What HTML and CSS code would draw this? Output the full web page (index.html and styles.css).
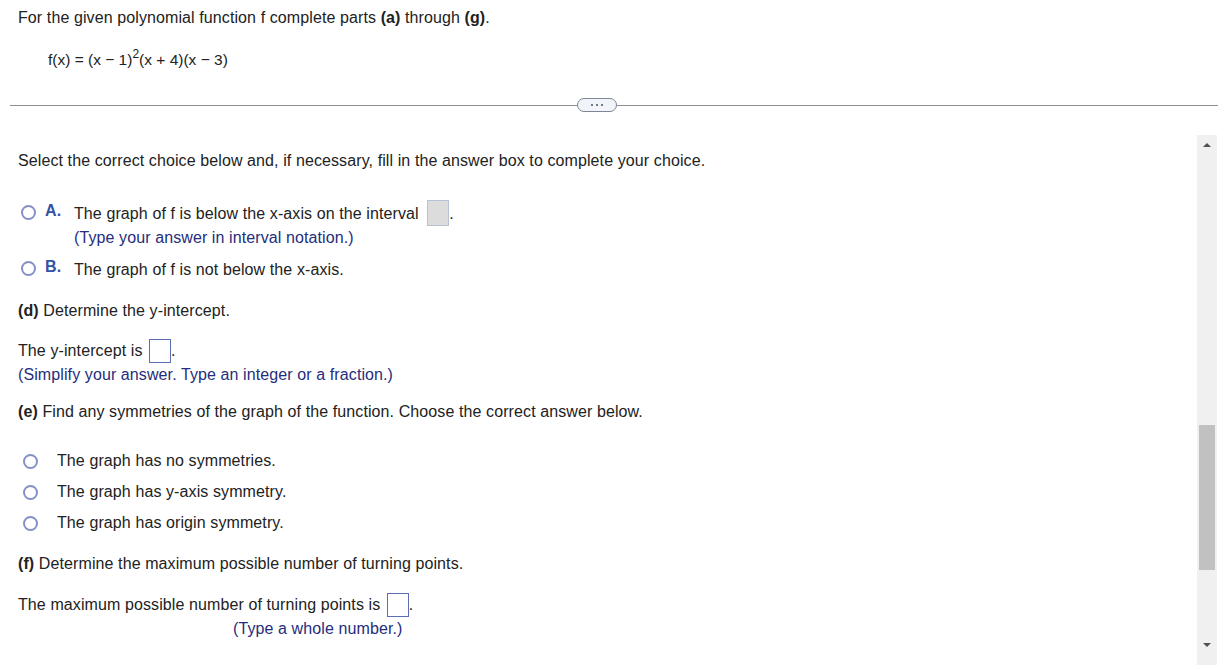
FILE: index.html
```html
<!DOCTYPE html>
<html>
<head>
<meta charset="utf-8">
<link rel="stylesheet" href="styles.css">
</head>
<body>
<div class="top">
  <div class="line intro">For the given polynomial function f complete parts <b>(a)</b> through <b>(g)</b>.</div>
  <div class="line formula">f(x) = (x − 1)<sup>2</sup>(x + 4)(x − 3)</div>
</div>
<div class="divider">
  <span class="rule rule-left"></span>
  <span class="pill"><i></i><i></i><i></i></span>
  <span class="rule"></span>
</div>
<div class="panel">
  <div class="content">
    <div class="line select">Select the correct choice below and, if necessary, fill in the answer box to complete your choice.</div>
    <div class="line choice choice-a"><span class="radio"></span><span class="letter">A.</span><span>The graph of f is below the x-axis on the interval <span class="box box-gray"></span>.</span></div>
    <div class="line hint hint-a">(Type your answer in interval notation.)</div>
    <div class="line choice choice-b"><span class="radio"></span><span class="letter">B.</span><span>The graph of f is not below the x-axis.</span></div>
    <div class="line part part-d"><b>(d)</b> Determine the y-intercept.</div>
    <div class="line yint">The y-intercept is <span class="box"></span>.</div>
    <div class="line hint hint-d">(Simplify your answer. Type an integer or a fraction.)</div>
    <div class="line part part-e"><b>(e)</b> Find any symmetries of the graph of the function. Choose the correct answer below.</div>
    <div class="line sym sym-1"><span class="radio"></span><span>The graph has no symmetries.</span></div>
    <div class="line sym sym-2"><span class="radio"></span><span>The graph has y-axis symmetry.</span></div>
    <div class="line sym sym-3"><span class="radio"></span><span>The graph has origin symmetry.</span></div>
    <div class="line part part-f"><b>(f)</b> Determine the maximum possible number of turning points.</div>
    <div class="line maxline">The maximum possible number of turning points is <span class="box"></span>.</div>
    <div class="line hint hint-f">(Type a whole number.)</div>
  </div>
  <div class="scrollbar">
    <span class="arrow up"></span>
    <span class="track"><span class="thumb"></span></span>
    <span class="arrow down"></span>
  </div>
</div>
</body>
</html>
```
FILE: styles.css
```css
html, body {
  margin: 0;
  padding: 0;
  background: #ffffff;
}
body {
  font-family: "Liberation Sans", Arial, sans-serif;
  font-size: 16px;
  letter-spacing: 0.1px;
  color: #222222;
  width: 1229px;
  height: 669px;
  overflow: hidden;
}
.line {
  line-height: 18px;
  height: 18px;
  white-space: nowrap;
}
b { font-weight: bold; }
.top {
  padding: 9px 0 0 18px;
}
.formula {
  margin-top: 24px;
  padding-left: 30px;
  font-size: 15.5px;
  letter-spacing: 0;
}
.formula sup {
  font-size: 12px;
  line-height: 0;
  position: relative;
  top: -1px;
}
.divider {
  display: flex;
  align-items: center;
  margin: 29px 0 0 10px;
  width: 1208px;
  height: 14px;
}
.rule {
  flex: 1;
  height: 1px;
  background: #8e8e8e;
}
.rule-left {
  flex: none;
  width: 567px;
}
.pill {
  width: 38px;
  height: 12px;
  border: 1px solid #7d8796;
  border-radius: 7px;
  background: #f1f4f8;
  display: flex;
  justify-content: center;
  align-items: center;
  gap: 3px;
}
.pill i {
  width: 2px;
  height: 2px;
  background: #4a5260;
  border-radius: 1px;
}
.panel {
  display: flex;
  margin-top: 19px;
}
.content {
  flex: 1;
  padding-left: 18px;
  padding-top: 21px;
}
.choice {
  display: flex;
  align-items: center;
  padding-left: 3px;
}
.radio {
  display: inline-block;
  box-sizing: border-box;
  width: 15px;
  height: 15px;
  border: 2px solid #8391c6;
  border-radius: 50%;
  flex: none;
  background: #fff;
}
.choice .radio { position: relative; top: -2px; }
.letter {
  color: #3451a5;
  font-weight: bold;
  width: 38px;
  padding-left: 9px;
  box-sizing: border-box;
  position: relative;
  top: -3px;
}
.choice-a { margin-top: 35px; }
.hint {
  color: #252d7c;
}
.hint-a { margin-top: 6px; padding-left: 56px; }
.choice-b { margin-top: 14px; }
.part-d { margin-top: 23px; }
.yint { margin-top: 22px; }
.hint-d { margin-top: 6px; }
.part-e { margin-top: 19px; }
.sym {
  display: flex;
  align-items: center;
  padding-left: 5px;
}
.sym .radio { margin-right: 19px; }
.sym-1 { margin-top: 31px; }
.sym-2, .sym-3 { margin-top: 13px; }
.part-f { margin-top: 23px; }
.maxline { margin-top: 23px; }
.hint-f { margin-top: 6px; padding-left: 215px; }
.box {
  display: inline-block;
  box-sizing: border-box;
  width: 22px;
  height: 24px;
  border: 1px solid #5b6db3;
  background: #fff;
  vertical-align: middle;
  margin: -4px 0 -4px 2px;
  position: relative;
  top: -1px;
}
.box-gray {
  width: 22px;
  height: 26px;
  border-color: #b8c0d4;
  background: #dcdcdc;
  margin-left: 4px;
}
.scrollbar {
  flex: none;
  width: 20px;
  height: 530px;
  margin: 4px 12px 0 0;
  background: #f0f0f0;
  display: flex;
  flex-direction: column;
  align-items: center;
}
.arrow {
  width: 0;
  height: 0;
  border-left: 4px solid transparent;
  border-right: 4px solid transparent;
  flex: none;
}
.arrow.up {
  border-bottom: 4px solid #505050;
  margin-top: 8px;
}
.arrow.down {
  border-top: 4px solid #505050;
  margin-bottom: 18px;
}
.track {
  flex: 1;
  width: 16px;
  position: relative;
}
.thumb {
  position: absolute;
  left: 0;
  top: 278px;
  width: 16px;
  height: 145px;
  background: #c1c1c1;
}
```
